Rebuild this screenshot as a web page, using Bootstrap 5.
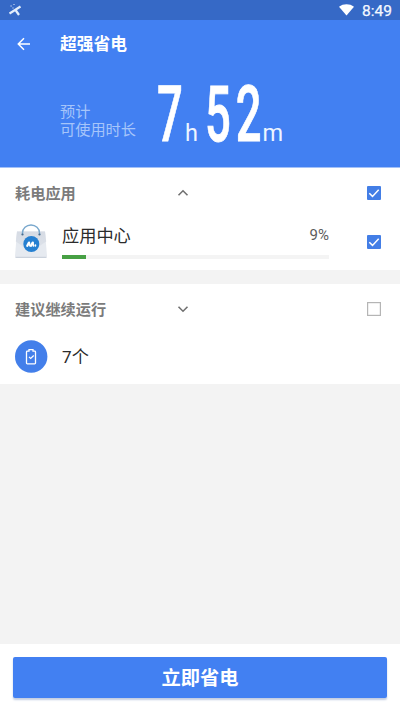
<!DOCTYPE html>
<html lang="zh-CN">
<head>
<meta charset="utf-8">
<meta name="viewport" content="width=device-width, initial-scale=1">
<title>超强省电</title>
<link href="https://cdn.jsdelivr.net/npm/bootstrap@5.3.0/dist/css/bootstrap.min.css" rel="stylesheet">
<style>
  body { font-family: Roboto, "Noto Sans CJK SC", sans-serif; background: #f3f3f3; color: #2b2b2b; }
  svg { display: block; flex: none; }
  .status-strip { height: 20px; background: #3669c6; padding: 0 8px 0 9px; font-size: 15.5px; line-height: 22px; color: #f4f8ff; }
  .status-time { padding-top: 2px; -webkit-text-stroke: .25px #f4f8ff; }
  .brand-fill { background: #4280f2; }
  .app-bar { height: 48px; padding-left: 16px; }
  .app-title { font-size: 16.8px; font-weight: 700; line-height: 24px; margin-left: 28px; }
  .estimate { height: 100px; padding-left: 60px; border-bottom: 1px solid #a3c1f8; }
  .estimate-label { width: 90px; padding-top: 35px; font-size: 15.2px; line-height: 18px; color: #a6c5fa; white-space: nowrap; }
  .apps-section { height: 102px; padding-left: 15px; }
  .keep-section { height: 100px; margin-top: 14px; padding-left: 15px; }
  .section-row { height: 50px; padding-right: 19px; }
  .section-title { width: 162px; font-size: 15.2px; font-weight: 700; color: #7b7b7b; line-height: 22px; padding-top: 1px; }
  .app-row { height: 47px; padding-right: 19px; }
  .keep-row { height: 45px; }
  .app-name { font-size: 17.2px; line-height: 24px; }
  .app-info { width: 267px; margin-left: 15px; }
  .keep-count { margin-left: 14px; }
  .share { font-size: 15px; line-height: 22px; color: #5c5c5c; }
  .usage { --bs-progress-height: 4px; --bs-progress-bg: #f4f4f4; --bs-progress-bar-bg: #47a044; --bs-progress-border-radius: 0; margin-top: 7px; }
  .bottom-bar { height: 66px; padding: 13px 13px 12px; }
  .save-btn { height: 41px; padding: 0; border: 0; border-radius: 2px; font-size: 19.3px; font-weight: 700; line-height: 43px; color: #fff; box-shadow: 0 2px 2px #c3cde2; }
</style>
</head>
<body>
<div class="d-flex flex-column vh-100 overflow-hidden">
  <div class="status-strip d-flex align-items-center">
    <svg width="14" height="14" viewBox="0 0 14 14" fill="none" stroke="#e4eefb" stroke-width="2.2"><path d="M.5 10.500 11.500 3.500M6.500 7 10 12"/><path d="M1.500 3h1.200M4.500 1.500h1M3.500 5h1" stroke-width="1"/></svg>
    <svg class="ms-auto" width="15" height="12" viewBox="0 0 14 12" preserveAspectRatio="none"><path d="M0 2.800C4-.5 10-.5 14 2.800L7 11.600Z" fill="#fff"/></svg>
    <span class="status-time ms-2">8:49</span>
  </div>
  <header class="brand-fill text-white">
    <div class="app-bar d-flex align-items-center">
      <svg width="16" height="14" viewBox="0 0 16 14" fill="none" stroke="#fff" stroke-width="1.500"><path d="M14 7H2.500M8 1.300 2.300 7 8 12.700"/></svg>
      <h1 class="app-title mb-0">超强省电</h1>
    </div>
    <div class="estimate d-flex">
      <div class="estimate-label">预计<br>可使用时长</div>
      <svg width="150" height="98" viewBox="150 68 150 98" fill="#fff" font-family="Roboto, sans-serif">
        <g font-size="77" font-weight="500" stroke="#fff" stroke-width=".8">
          <text transform="translate(157 141) scale(.59 1)">7</text>
          <text transform="translate(205 141) scale(.59 1)">5</text>
          <text transform="translate(235.800 141) scale(.59 1)">2</text>
        </g>
        <g font-size="23.500" fill="#eef5ff">
          <text x="185" y="141">h</text>
          <text x="262.500" y="141">m</text>
        </g>
      </svg>
    </div>
  </header>
  <main class="flex-grow-1">
    <section class="apps-section bg-white">
      <div class="section-row d-flex align-items-center">
        <h2 class="section-title mb-0">耗电应用</h2>
        <svg width="12" height="8" viewBox="0 0 12 8" fill="none" stroke="#707070" stroke-width="1.600"><path d="M1.500 6.200 6 1.800l4.500 4.400"/></svg>
        <svg class="ms-auto" width="14" height="14" viewBox="0 0 14 14"><rect width="14" height="14" rx="1" fill="#437ee6"/><path d="M2.300 7.200 5.500 10.400 11.700 3.800" fill="none" stroke="#fff" stroke-width="1.500"/></svg>
      </div>
      <div class="app-row d-flex align-items-center">
        <svg width="32" height="36" viewBox="0 0 32 36">
          <defs><linearGradient id="bag" x2="0" y2="1"><stop stop-color="#d6dbe4"/><stop offset="1" stop-color="#dfe4eb"/></linearGradient></defs>
          <path d="M2 7.500h28L32 32q0 2-2 2H2q-2 0-2-2Z" fill="#e6eaf0"/>
          <path d="M2 7.500h28l1.200 10L16 28 .8 17.500Z" fill="url(#bag)"/>
          <path d="M.5 33.300h31" stroke="#c5ccd7"/>
          <path d="M7.500 10.500v-1.500a8.500 8 0 0 1 17 0v1.500" fill="none" stroke="#79a8cd" stroke-width="1.400"/>
          <circle cx="7.500" cy="10.500" r="1.100" fill="#496c8e"/><circle cx="24.500" cy="10.500" r="1.100" fill="#496c8e"/>
          <circle cx="16.300" cy="20" r="8" fill="#2680d1"/>
          <g fill="none" stroke="#fff" stroke-width="2.300" stroke-linecap="round"><path d="m12.300 21.800 1.700-3.200M16 21.800l1.700-3.200"/><path d="m14.200 18.800.8 3M17.900 18.800l.5 3M20.400 21v.8" stroke-width="1.700"/></g>
        </svg>
        <div class="app-info">
          <div class="d-flex justify-content-between">
            <span class="app-name">应用中心</span>
            <span class="share">9%</span>
          </div>
          <div class="progress usage" role="progressbar" aria-label="应用中心" aria-valuenow="9" aria-valuemin="0" aria-valuemax="100"><div class="progress-bar" style="width:9%"></div></div>
        </div>
        <svg class="ms-auto" width="14" height="14" viewBox="0 0 14 14"><rect width="14" height="14" rx="1" fill="#437ee6"/><path d="M2.300 7.200 5.500 10.400 11.700 3.800" fill="none" stroke="#fff" stroke-width="1.500"/></svg>
      </div>
    </section>
    <section class="keep-section bg-white">
      <div class="section-row d-flex align-items-center">
        <h2 class="section-title mb-0">建议继续运行</h2>
        <svg width="12" height="8" viewBox="0 0 12 8" fill="none" stroke="#707070" stroke-width="1.600"><path d="M1.500 1.800 6 6.200l4.500-4.400"/></svg>
        <svg class="ms-auto" width="14" height="14" viewBox="0 0 14 14"><rect x=".6" y=".6" width="12.800" height="12.800" fill="#fff" stroke="#b5b5b5" stroke-width="1.200"/></svg>
      </div>
      <div class="keep-row d-flex align-items-center">
        <svg width="33" height="33" viewBox="0 0 33 33" fill="none" stroke="#fff"><circle cx="16.200" cy="16.500" r="16.200" fill="#437fea" stroke="none"/><path d="M12.300 11.200h1.700V9.700h4v1.500h1.700q.8 0 .8.800v11q0 .8-.8.800h-7.400q-.8 0-.8-.8V12q0-.8.8-.8Z" stroke-width="1.300"/><path d="m14 16.800 1.700 1.700 3-3" stroke-width="1.200"/></svg>
        <span class="app-name keep-count">7个</span>
      </div>
    </section>
  </main>
  <footer class="bottom-bar bg-white">
    <button type="button" class="btn save-btn brand-fill w-100 d-block">立即省电</button>
  </footer>
</div>
<script src="https://cdn.jsdelivr.net/npm/bootstrap@5.3.0/dist/js/bootstrap.bundle.min.js"></script>
</body>
</html>
